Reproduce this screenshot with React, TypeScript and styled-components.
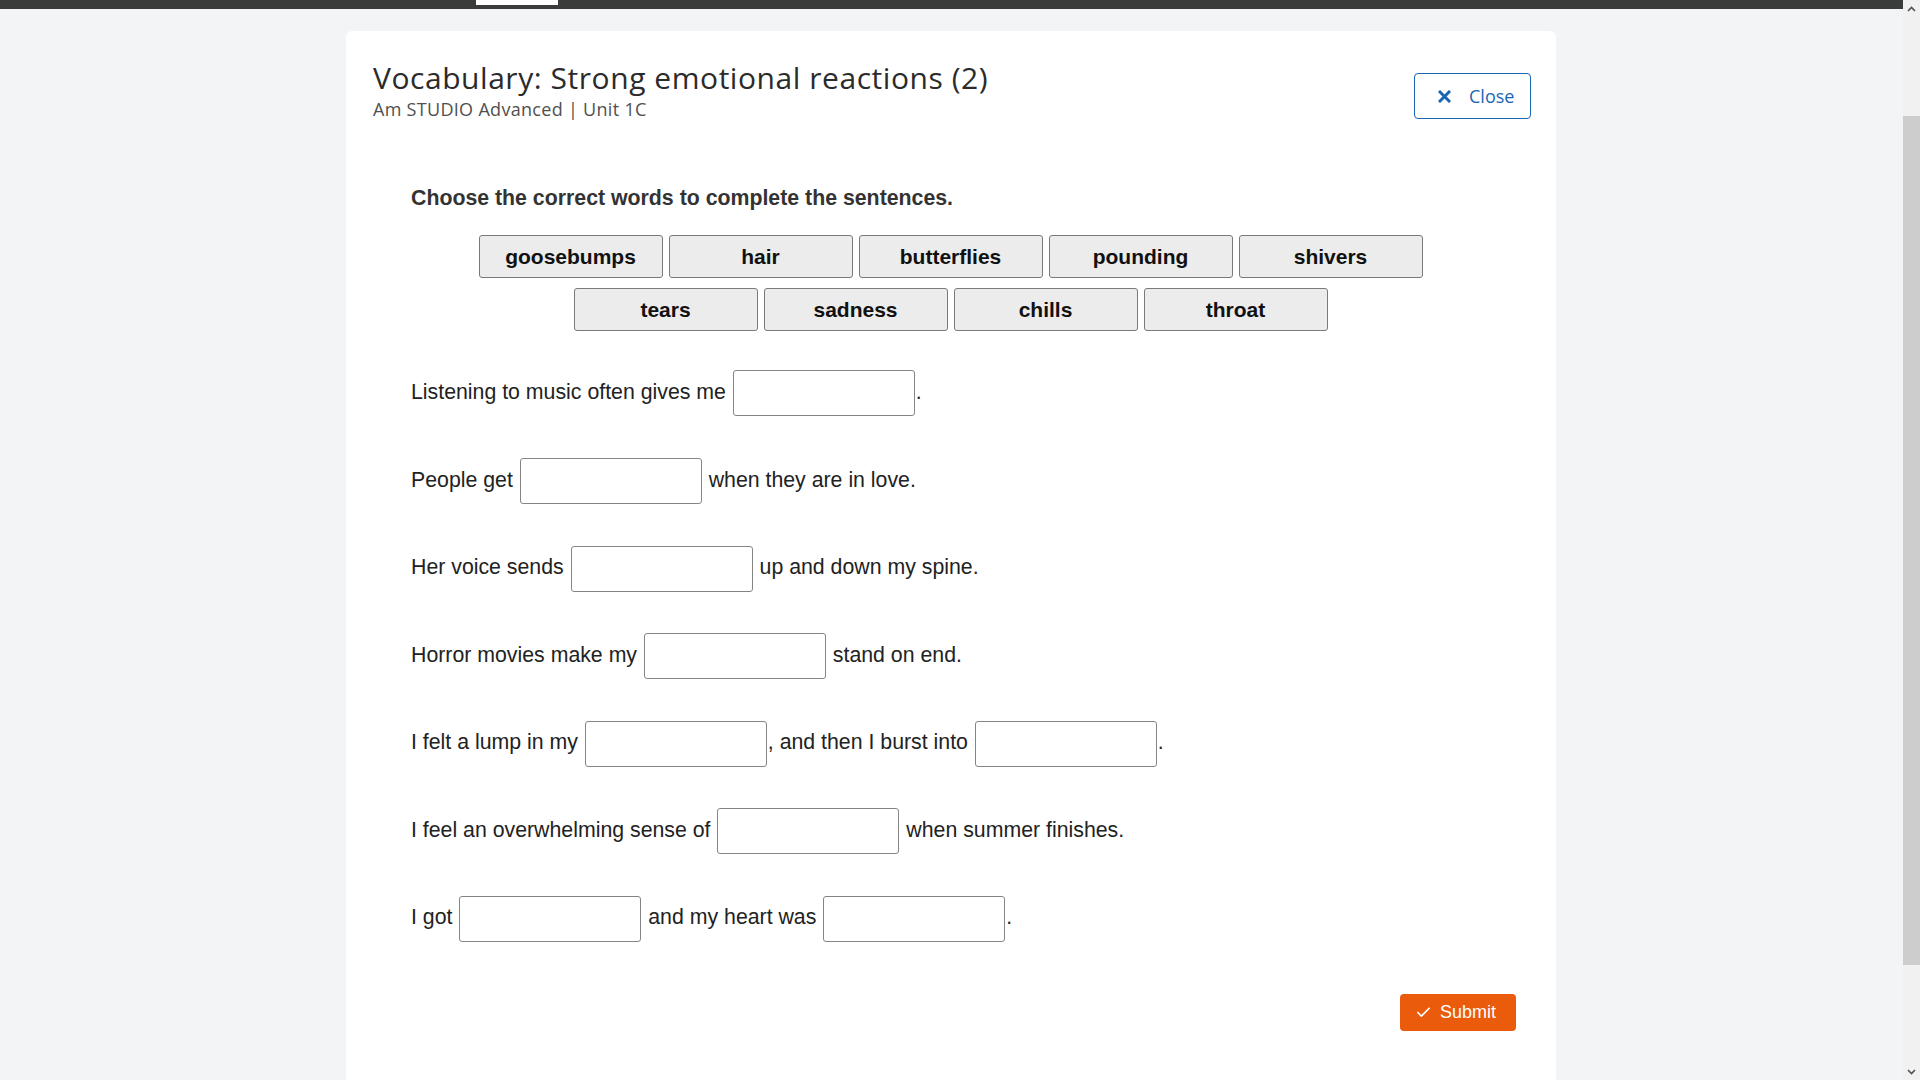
import React from 'react';
import styled, { createGlobalStyle } from 'styled-components';
import { Check } from 'lucide-react';

const GlobalStyle = createGlobalStyle`
  html, body {
    margin: 0;
    padding: 0;
    height: 100%;
    overflow: hidden;
  }
  body {
    font-family: "Liberation Sans", Arial, sans-serif;
    background: #f3f4f6;
  }
  * {
    box-sizing: border-box;
  }
`;

const Shell = styled.div`
  display: flex;
  flex-direction: row;
  width: 100vw;
  height: 100vh;
`;

const Main = styled.div`
  flex: 1;
  display: flex;
  flex-direction: column;
  min-width: 0;
`;

const TopBar = styled.div`
  height: 9px;
  flex-shrink: 0;
  background: #3a3b3b;
  padding-left: 476px;
`;

const ActiveTab = styled.div`
  width: 82px;
  height: 5px;
  background: #ffffff;
`;

const Page = styled.div`
  flex: 1;
  display: flex;
  padding: 22px 0 0 346px;
  background: #f3f4f6;
  overflow: hidden;
`;

const Card = styled.section`
  width: 1210px;
  background: #ffffff;
  border-radius: 6px 6px 0 0;
  padding: 28px 25px 0 27px;
`;

const Header = styled.div`
  display: flex;
  flex-direction: row;
  justify-content: space-between;
  align-items: flex-start;
`;

const Titles = styled.div`
  display: flex;
  flex-direction: column;
`;

const Title = styled.h1`
  margin: 0;
  font-family: "Open Sans", sans-serif;
  font-size: 30px;
  font-weight: 400;
  letter-spacing: 0.55px;
  line-height: 38px;
  color: #2b2b2b;
`;

const Subtitle = styled.div`
  font-family: "Open Sans", sans-serif;
  font-size: 18px;
  letter-spacing: 0.3px;
  line-height: 24px;
  color: #4f4f4f;
`;

const CloseButton = styled.button`
  display: flex;
  align-items: center;
  gap: 18px;
  margin-top: 14px;
  width: 117px;
  height: 46px;
  padding: 0 0 0 23px;
  border: 1px solid #1a66b3;
  border-radius: 4px;
  background: #ffffff;
  color: #1a66b3;
  font-family: "Open Sans", sans-serif;
  font-size: 18px;
  cursor: pointer;
`;

const Exercise = styled.div`
  padding: 65px 41px 0 38px;
`;

const Instruction = styled.p`
  margin: 0;
  font-size: 21.3px;
  font-weight: 700;
  line-height: 24px;
  color: #333333;
`;

const WordBank = styled.div`
  display: flex;
  flex-wrap: wrap;
  justify-content: center;
  gap: 10px 6px;
  max-width: 944px;
  margin: 25px auto 0;
`;

const WordButton = styled.button`
  width: 184px;
  height: 43px;
  padding: 0;
  border: 1px solid #7a7a7a;
  border-radius: 3px;
  background: #ececec;
  color: #111111;
  font-family: "Liberation Sans", Arial, sans-serif;
  font-size: 21px;
  font-weight: 700;
  cursor: pointer;
`;

const Sentences = styled.div`
  display: flex;
  flex-direction: column;
  gap: 40.2px;
  margin-top: 38px;
`;

const Sentence = styled.p`
  margin: 0;
  font-size: 21.3px;
  line-height: 46px;
  color: #222222;
  white-space: pre;
`;

const Blank = styled.input`
  display: inline-block;
  vertical-align: middle;
  width: 182px;
  height: 46px;
  margin: 0 1px;
  border: 1px solid #858585;
  border-radius: 3px;
  background: #ffffff;
  font-size: 21px;
`;

const Footer = styled.div`
  display: flex;
  justify-content: flex-end;
  padding: 52px 15px 0 0;
`;

const SubmitButton = styled.button`
  display: flex;
  align-items: center;
  gap: 8px;
  width: 116px;
  height: 37px;
  padding: 0 0 0 15px;
  border: none;
  border-radius: 4px;
  background: #ea5b0c;
  color: #ffffff;
  font-family: "Liberation Sans", Arial, sans-serif;
  font-size: 18px;
  cursor: pointer;
`;

const ScrollBar = styled.div`
  width: 17px;
  flex-shrink: 0;
  display: flex;
  flex-direction: column;
  background: #f1f1f1;
`;

const ScrollArrow = styled.div`
  height: 17px;
  display: flex;
  align-items: center;
  justify-content: center;
`;

const ScrollTrack = styled.div`
  flex: 1;
  padding-top: 99px;
`;

const ScrollThumb = styled.div`
  width: 100%;
  height: 849px;
  background: #cdcdcd;
`;

const words = ['goosebumps', 'hair', 'butterflies', 'pounding', 'shivers', 'tears', 'sadness', 'chills', 'throat'];

// each sentence: text parts with a blank between them
const sentences: string[][] = [
  ['Listening to music often gives me ', '.'],
  ['People get ', ' when they are in love.'],
  ['Her voice sends ', ' up and down my spine.'],
  ['Horror movies make my ', ' stand on end.'],
  ['I felt a lump in my ', ', and then I burst into ', '.'],
  ['I feel an overwhelming sense of ', ' when summer finishes.'],
  ['I got ', ' and my heart was ', '.'],
];

const CloseIcon = () => (
  <svg width="13" height="13" viewBox="0 0 13 13">
    <path d="M2 2 L11 11 M11 2 L2 11" stroke="#1a66b3" strokeWidth="3" strokeLinecap="square" />
  </svg>
);

const Chevron = ({ up }: { up: boolean }) => (
  <svg width="9" height="6" viewBox="0 0 9 6">
    <path d={up ? 'M1 5 L4.5 1.5 L8 5' : 'M1 1 L4.5 4.5 L8 1'} fill="none" stroke="#505050" strokeWidth="1.6" />
  </svg>
);

const App: React.FC = () => {
  return (
    <Shell>
      <GlobalStyle />
      <Main>
        <TopBar>
          <ActiveTab />
        </TopBar>
        <Page>
          <Card>
            <Header>
              <Titles>
                <Title>Vocabulary: Strong emotional reactions (2)</Title>
                <Subtitle>Am STUDIO Advanced | Unit 1C</Subtitle>
              </Titles>
              <CloseButton>
                <CloseIcon />
                Close
              </CloseButton>
            </Header>
            <Exercise>
              <Instruction>Choose the correct words to complete the sentences.</Instruction>
              <WordBank>
                {words.map((w) => (
                  <WordButton key={w}>{w}</WordButton>
                ))}
              </WordBank>
              <Sentences>
                {sentences.map((parts, i) => (
                  <Sentence key={i}>
                    {parts.map((p, j) => (
                      <React.Fragment key={j}>
                        {p}
                        {j < parts.length - 1 && <Blank type="text" />}
                      </React.Fragment>
                    ))}
                  </Sentence>
                ))}
              </Sentences>
            </Exercise>
            <Footer>
              <SubmitButton>
                <Check size={17} strokeWidth={2.4} />
                Submit
              </SubmitButton>
            </Footer>
          </Card>
        </Page>
      </Main>
      <ScrollBar>
        <ScrollArrow>
          <Chevron up />
        </ScrollArrow>
        <ScrollTrack>
          <ScrollThumb />
        </ScrollTrack>
        <ScrollArrow>
          <Chevron up={false} />
        </ScrollArrow>
      </ScrollBar>
    </Shell>
  );
};

export default App;
